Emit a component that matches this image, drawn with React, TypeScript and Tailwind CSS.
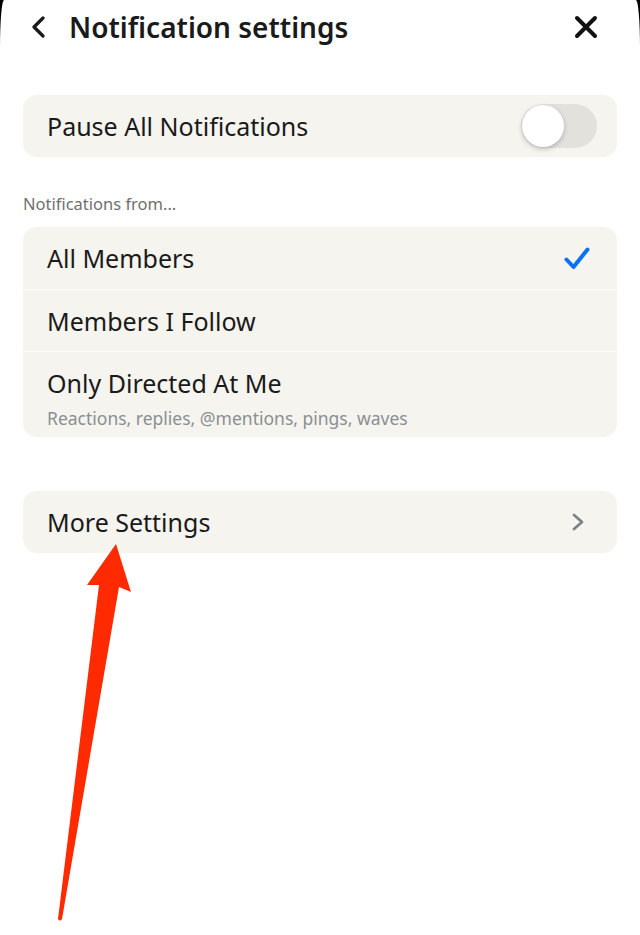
import React from 'react';

const rowText = "text-[25px] text-[#1a1a1a] leading-[32px]";

const Toggle: React.FC = () => (
  <div className="relative w-[76px] h-[44px] rounded-full bg-[#e2e1dc]">
    <div className="absolute left-[1px] top-[1px] w-[42px] h-[42px] rounded-full bg-white shadow-[0_2px_5px_rgba(0,0,0,0.22)]" />
  </div>
);

const App: React.FC = () => {
  return (
    <div className="relative w-[640px] min-h-[935px] bg-black overflow-hidden font-['Noto_Sans',sans-serif]">
      <div className="min-h-[935px] bg-white rounded-tl-[4px_48px] rounded-tr-[4px_48px]">
        {/* header */}
        <div className="flex items-center h-[54px] pl-[30px] pr-[42px]">
          <svg width="16" height="22" viewBox="0 0 16 22" fill="none">
            <path d="M13 2 L4 11 L13 20" stroke="#1a1a1a" strokeWidth="3.2" strokeLinecap="round" strokeLinejoin="round" />
          </svg>
          <h1 className="ml-[23px] text-[28px] font-semibold text-[#1a1a1a] leading-[36px]">Notification settings</h1>
          <svg className="ml-auto" width="24" height="24" viewBox="0 0 24 24" fill="none">
            <path d="M3 3 L21 21 M21 3 L3 21" stroke="#111" strokeWidth="4" strokeLinecap="round" />
          </svg>
        </div>

        {/* pause */}
        <div className="mx-[23px] mt-[41px] h-[62px] rounded-[14px] bg-[#f5f4ee] flex items-center pl-[24px] pr-[20px]">
          <span className={rowText}>Pause All Notifications</span>
          <div className="ml-auto">
            <Toggle />
          </div>
        </div>

        <div className="mx-[23px] mt-[37px] text-[16.5px] leading-[20px] text-[#707070]">Notifications from...</div>

        {/* options */}
        <div className="mx-[23px] mt-[13px] rounded-[14px] bg-[#f5f4ee] overflow-hidden">
          <div className="h-[62px] flex items-center pl-[24px] pr-[27px]">
            <span className={rowText}>All Members</span>
            <svg className="ml-auto" width="26" height="23" viewBox="0 0 26 23" fill="none">
              <path d="M2.5 12.5 L9.5 20 L23.5 2.5" stroke="#0b72f5" strokeWidth="4" strokeLinecap="round" strokeLinejoin="round" />
            </svg>
          </div>
          <div className="h-[62px] flex items-center pl-[24px] border-t border-[#fcfcf9]">
            <span className={rowText}>Members I Follow</span>
          </div>
          <div className="h-[86px] pl-[24px] pt-[15px] border-t border-[#fcfcf9]">
            <div className={rowText}>Only Directed At Me</div>
            <div className="mt-[9px] text-[17.5px] leading-[20px] text-[#8a8f94]">Reactions, replies, @mentions, pings, waves</div>
          </div>
        </div>

        {/* more */}
        <div className="mx-[23px] mt-[54px] h-[62px] rounded-[14px] bg-[#f5f4ee] flex items-center pl-[24px] pr-[33px]">
          <span className={rowText}>More Settings</span>
          <svg className="ml-auto" width="12" height="18" viewBox="0 0 12 18" fill="none">
            <path d="M2 2 L10 9 L2 16" stroke="#7d8288" strokeWidth="2.8" strokeLinecap="round" strokeLinejoin="round" />
          </svg>
        </div>
      </div>

      {/* annotation arrow */}
      <svg className="absolute left-0 top-0 pointer-events-none" width="640" height="935" viewBox="0 0 640 935">
        <path
          d="M116 544 L131 592 L119 587 L62 919 Q60 922 58 919 L99 585 L87 585 Z"
          fill="#ff2a00"
        />
      </svg>
    </div>
  );
};

export default App;
